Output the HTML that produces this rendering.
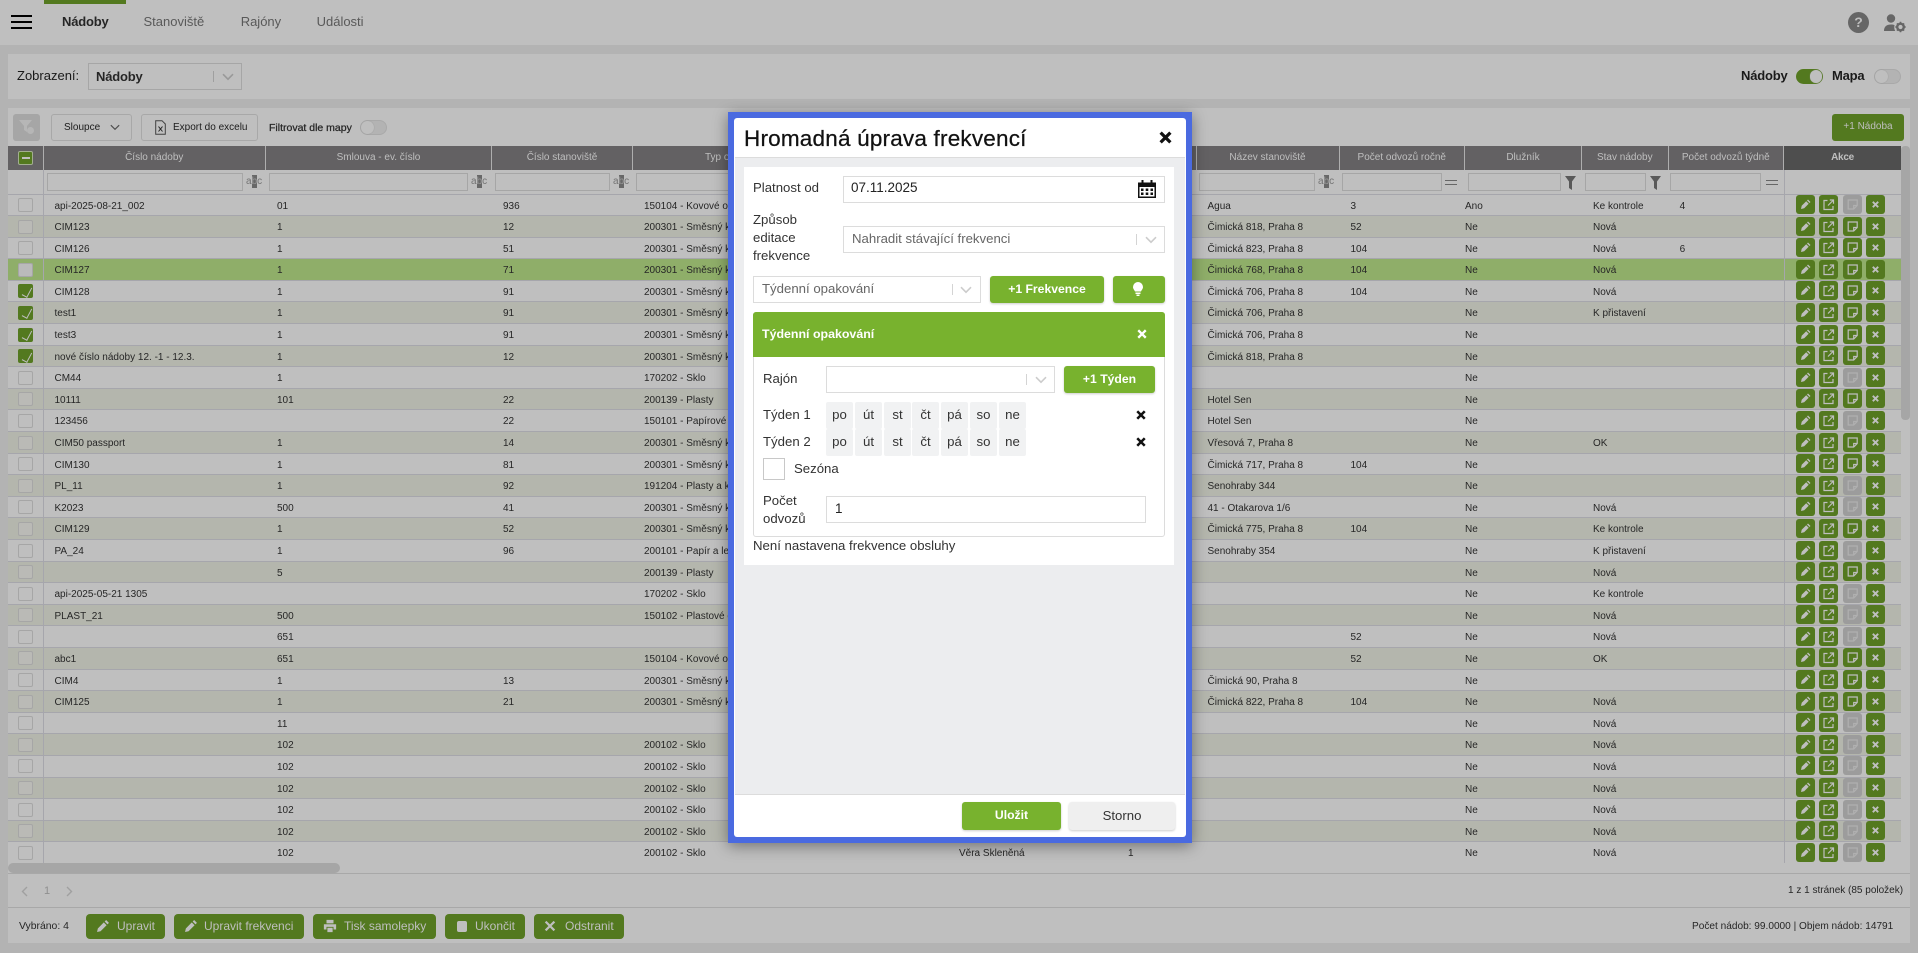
<!DOCTYPE html>
<html lang="cs"><head><meta charset="utf-8"><title>Hromadná úprava frekvencí</title>
<style>
*{box-sizing:border-box}
html,body{margin:0;padding:0}
body{width:1918px;height:953px;overflow:hidden;position:relative;background:#b3b3b3;font-family:"Liberation Sans",sans-serif;color:#262626}
.a{position:absolute}
.t{position:absolute;white-space:nowrap;line-height:20px}
.p{position:absolute;background:#bfbfbf}
.btn{position:absolute;background:#78b22e;color:#fff;border-radius:3px;text-align:center;white-space:nowrap}
.gb{background:#53791f;color:#bfbfbf}
.ol{position:absolute;border:1px solid #a8a8a8;border-radius:3px;background:#bfbfbf;font-size:10px;color:#1c1c1c;line-height:25px;white-space:nowrap}
.r{display:grid;grid-template-columns:35.5px 222.5px 226px 141px 315px 169px 79.5px 143px 125.5px 117px 86.6px 115.4px 117px;height:21.6px;line-height:23.2px;font-size:10px;border-bottom:1px solid #a6a6ac;background:#bfbfbf;color:#262626}
.r:nth-child(even){background:#b4b6ad}
.r.hl{background:#8fae69}
.r span{padding-left:11px;white-space:nowrap;overflow:hidden;min-width:0}
.r span:nth-child(10){padding-left:0}
.r span.c{padding:0}
.c i{display:block;position:relative;width:14.5px;height:14px;margin:3.5px 0 0 10.3px;border:1px solid #a6a6a6;border-radius:2px;background:#bfbfbf}
.r:nth-child(even) .c i{background:#babab6}
.r.hl .c i{background:#bababa}
.r .c i.on{background:#53791f;border-color:#53791f}
.c i.on:after{content:"";position:absolute;left:4.5px;top:0.5px;width:4.5px;height:10px;border:solid #bfbfbf;border-width:0 1.5px 1.5px 0;transform:rotate(28deg)}
.r svg{width:89px;height:19px;margin:.5px 0 0 12px;display:block}
.th{position:absolute;top:146px;height:24px;line-height:24px;background:#636163;color:#bfbfbf;font-size:10px;text-align:center;border-right:1px solid #aeaeae;white-space:nowrap;overflow:hidden}
.fi{position:absolute;top:173px;height:18px;background:#bfbfbf;border:1px solid #a6a6a6}
.abc{position:absolute;top:176px;font-size:10px;line-height:12px;color:#737373;white-space:nowrap;width:15px;text-align:center}
.abc b{background:#686868;color:#9b9b9b;font-weight:normal;padding:1px 0}
.fn{position:absolute;top:176px;width:11px;height:14px;fill:#595959}
.eq{position:absolute;top:180px;width:12px;height:5px;border-top:1.5px solid #666;border-bottom:1.5px solid #666}
.bb{position:absolute;top:914px;height:25px;line-height:24px;background:#53791f;color:#bfbfbf;border-radius:4px;font-size:12px;white-space:nowrap}
.bb svg{position:absolute;top:5px;left:10px;width:14px;height:14px}
.bb em{position:absolute;font-style:normal;top:0}
.lb{font-size:13.2px;color:#333}
.bx{position:absolute;background:#fff;border:1px solid #dcdcdc}
.sep{position:absolute;width:1px;height:11px;background:#d4d4d4}
.chev{position:absolute;width:12px;height:8px;fill:none;stroke:#ccc;stroke-width:1.6}
.chip{position:absolute;width:27px;height:27px;background:#f1f2f3;border-radius:2px;font-size:13.2px;line-height:26px;text-align:center;color:#333}
.x{position:absolute;width:12px;height:12px;fill:none;stroke:#111;stroke-width:3}
.tg{position:absolute;width:27px;height:14.5px;border-radius:8px;background:#b3b3b3;border:1px solid #a9a9a9}
.tg:after{content:"";position:absolute;left:0;top:0;width:12.5px;height:12.5px;border-radius:50%;background:#bfbfbf;box-shadow:0 0 1px #8c8c8c}
.tg.on{background:#53791f;border-color:#53791f}
.tg.on:after{left:12.5px}
</style></head><body>

<svg width="0" height="0" style="position:absolute">
<defs>
<symbol id="pn" viewBox="0 0 16 16"><path d="M11.6 1.2l3.2 3.2-1.7 1.7-3.2-3.2zM8.9 3.9l3.2 3.2-6.9 6.9-4 .9.9-4z" fill="#bfbfbf"/></symbol>
<symbol id="A" viewBox="0 0 89 19">
<rect x="0" width="19" height="19" rx="3" fill="#53791f"/><rect x="23" width="19" height="19" rx="3" fill="#53791f"/><rect x="47" width="19" height="19" rx="3" fill="#53791f"/><rect x="70" width="19" height="19" rx="3" fill="#53791f"/>
<path d="M12 4.500l2.500 2.500-1 1-2.500-2.500zM10.200 6.300l2.500 2.500-4.500 4.500-3.200.7.700-3.200z" fill="#bfbfbf"/>
<g fill="none" stroke="#bfbfbf" stroke-width="1.200"><path d="M31.500 5.500H28v9h9V11M32 10.500L37 5.500M33.800 5h3.700v3.700"/><path d="M52.200 5h9v5.500L57.700 14h-5.500zM57.700 14v-3.500h3.500"/><path d="M76.800 6.800l5.400 5.400M82.200 6.800l-5.400 5.400" stroke-width="1.900"/></g>
</symbol>
<symbol id="D" viewBox="0 0 89 19">
<rect x="0" width="19" height="19" rx="3" fill="#53791f"/><rect x="23" width="19" height="19" rx="3" fill="#53791f"/><rect x="47" width="19" height="19" rx="3" fill="#9c9c9c"/><rect x="70" width="19" height="19" rx="3" fill="#53791f"/>
<path d="M12 4.500l2.500 2.500-1 1-2.500-2.500zM10.200 6.300l2.500 2.500-4.500 4.500-3.200.7.700-3.200z" fill="#bfbfbf"/>
<g fill="none" stroke="#bfbfbf" stroke-width="1.200"><path d="M31.500 5.500H28v9h9V11M32 10.500L37 5.500M33.800 5h3.700v3.700"/><path d="M52.200 5h9v5.500L57.700 14h-5.500zM57.700 14v-3.500h3.500" stroke="#b0b0b0"/><path d="M76.800 6.800l5.400 5.400M82.200 6.800l-5.400 5.400" stroke-width="1.900"/></g>
</symbol>
<symbol id="ch" viewBox="0 0 12 8"><path d="M1 1.200l5 5 5-5"/></symbol>
<symbol id="xx" viewBox="0 0 12 12"><path d="M1.500 1.500l9 9M10.500 1.500l-9 9"/></symbol>
<symbol id="fu" viewBox="0 0 11 14"><path d="M0 0h11L7 5.500V14L4 12V5.500z"/></symbol>
</defs></svg>

<!-- top bar -->
<div class="p" style="left:0;top:0;width:1918px;height:45px"></div>
<div class="a gb" style="left:44px;top:0;width:82px;height:4px"></div>
<div class="a" style="left:11px;top:15px;width:21px;height:2px;background:#000"></div>
<div class="a" style="left:11px;top:21px;width:21px;height:2px;background:#000"></div>
<div class="a" style="left:11px;top:27px;width:21px;height:2px;background:#000"></div>
<div class="t" style="left:62px;top:12px;font-size:13px;font-weight:bold;color:#262626;letter-spacing:-.2px">Nádoby</div>
<div class="t" style="left:143.500px;top:12px;font-size:13px;color:#595959">Stanoviště</div>
<div class="t" style="left:240.700px;top:12px;font-size:13px;color:#595959">Rajóny</div>
<div class="t" style="left:316.600px;top:12px;font-size:13px;color:#595959">Události</div>
<div class="a" style="left:1848px;top:12px;width:21px;height:21px;border-radius:50%;background:#666;color:#bfbfbf;font-weight:bold;font-size:14px;line-height:21px;text-align:center">?</div>
<svg class="a" style="left:1884px;top:14px" width="22" height="19" viewBox="0 0 22 19"><circle cx="7" cy="4.500" r="4.200" fill="#666"/><path d="M0 17c0-4.500 2.500-6.500 7-6.500 1.500 0 2.700.2 3.600.7-.7 1.800-.3 4 .6 5.800z" fill="#666"/><circle cx="16.500" cy="13" r="3.300" fill="none" stroke="#666" stroke-width="2.400"/><path d="M16.500 7.800v2M16.500 16.200v2M11.300 13h2M19.700 13h2M12.900 9.400l1.300 1.300M18.800 15.300l1.300 1.300M20.100 9.400l-1.300 1.300M14.200 15.300l-1.300 1.300" stroke="#666" stroke-width="1.600"/></svg>

<!-- view panel -->
<div class="p" style="left:8px;top:54px;width:1902px;height:45px"></div>
<div class="t" style="left:17px;top:65.500px;font-size:13px;color:#1a1a1a">Zobrazení:</div>
<div class="a" style="left:88px;top:63px;width:154px;height:27px;background:#bfbfbf;border:1px solid #a6a6a6"></div>
<div class="t" style="left:96px;top:66.500px;font-size:13px;font-weight:bold;color:#262626;letter-spacing:-.2px">Nádoby</div>
<div class="sep" style="left:213px;top:71px;background:#9f9f9f"></div>
<svg class="chev" style="left:222px;top:73px;stroke:#999"><use href="#ch"/></svg>
<div class="t" style="left:1741px;top:65.500px;font-size:13px;font-weight:bold;color:#1a1a1a;letter-spacing:-.2px">Nádoby</div>
<div class="tg on" style="left:1796px;top:69px"></div>
<div class="t" style="left:1832px;top:65.500px;font-size:13px;font-weight:bold;color:#1a1a1a;letter-spacing:-.2px">Mapa</div>
<div class="tg" style="left:1874px;top:69px"></div>

<!-- table panel -->
<div class="p" style="left:8px;top:108px;width:1902px;height:835px"></div>
<div class="a" style="left:13px;top:114px;width:27px;height:27px;border-radius:3px;background:#a6a6a6"></div>
<svg class="a" style="left:19px;top:120px" width="16" height="16" viewBox="0 0 16 16"><path d="M0 0h13L8 6v6L5 10V6z" fill="#b6b6b6"/><circle cx="11.500" cy="10.500" r="3.500" fill="#b6b6b6"/></svg>
<div class="ol" style="left:51px;top:114px;width:81px;height:27px;padding-left:12px">Sloupce</div>
<svg class="chev" style="left:110px;top:124px;width:10px;height:7px;stroke:#4c4c4c;stroke-width:1.4"><use href="#ch"/></svg>
<div class="ol" style="left:141px;top:114px;width:117px;height:27px;padding-left:31px">Export do excelu</div>
<svg class="a" style="left:155px;top:120px" width="11" height="15" viewBox="0 0 11 15"><path d="M.7.700h6.300l3.300 3.300v10.300H.7z" fill="none" stroke="#404040"/><path d="M3.500 6.500l4 5M7.500 6.500l-4 5" stroke="#262626"/></svg>
<div class="t" style="left:269px;top:118px;font-size:10.500px;color:#262626;-webkit-text-stroke:.25px #262626">Filtrovat dle mapy</div>
<div class="tg" style="left:360px;top:120px"></div>
<div class="btn gb" style="left:1832px;top:114px;width:72px;height:27px;font-size:10px;line-height:26px">+1 Nádoba</div>

<!-- header -->
<div class="th" style="left:8px;width:35.500px"></div>
<div class="a gb" style="left:18.300px;top:151px;width:14.500px;height:14px;border:1px solid #a2ae90;border-radius:2px"></div>
<div class="a" style="left:21.500px;top:157px;width:8px;height:2px;background:#bfbfbf"></div>
<div class="th" style="left:43.500px;width:222.500px">Číslo nádoby</div>
<div class="th" style="left:266px;width:226px">Smlouva - ev. číslo</div>
<div class="th" style="left:492px;width:141px">Číslo stanoviště</div>
<div class="th" style="left:633px;width:315px;text-align:left;padding-left:72px">Typ odpadu a nádoby</div>
<div class="th" style="left:948px;width:169px">Vlastník</div>
<div class="th" style="left:1117px;width:79.500px">Počet</div>
<div class="th" style="left:1196.500px;width:143px">Název stanoviště</div>
<div class="th" style="left:1339.500px;width:125.500px">Počet odvozů ročně</div>
<div class="th" style="left:1465px;width:117px">Dlužník</div>
<div class="th" style="left:1582px;width:86.600px">Stav nádoby</div>
<div class="th" style="left:1668.600px;width:115.400px">Počet odvozů týdně</div>
<div class="th" style="left:1784px;width:117px;background:#4e4e4e;font-weight:bold;border:0;letter-spacing:-.3px">Akce</div>

<!-- filter row -->
<div class="a" style="left:8px;top:170px;width:1893px;height:24.500px;background:#bfbfbf;border-bottom:1px solid #a6a6ac"></div>
<div class="fi" style="left:47px;width:196px"></div><div class="abc" style="left:246px"><span>a</span><b>b</b><span>c</span></div>
<div class="fi" style="left:269px;width:199px"></div><div class="abc" style="left:471px"><span>a</span><b>b</b><span>c</span></div>
<div class="fi" style="left:495px;width:114.500px"></div><div class="abc" style="left:613px"><span>a</span><b>b</b><span>c</span></div>
<div class="fi" style="left:636px;width:260px"></div>
<div class="fi" style="left:1199px;width:116px"></div><div class="abc" style="left:1318px"><span>a</span><b>b</b><span>c</span></div>
<div class="fi" style="left:1342px;width:99.500px"></div><div class="eq" style="left:1445px"></div>
<div class="fi" style="left:1468px;width:92.500px"></div><svg class="fn" style="left:1565px"><use href="#fu"/></svg>
<div class="fi" style="left:1585px;width:61px"></div><svg class="fn" style="left:1649.500px"><use href="#fu"/></svg>
<div class="fi" style="left:1670px;width:90.500px"></div><div class="eq" style="left:1766px"></div>

<!-- rows -->
<div class="a" style="left:8px;top:194.500px;width:1893px">
<div class="r"><span class="c"><i></i></span><span>api-2025-08-21_002</span><span>01</span><span>936</span><span>150104 - Kovové obaly</span><span></span><span></span><span>Agua</span><span>3</span><span>Ano</span><span>Ke kontrole</span><span>4</span><svg><use href="#D"/></svg></div>
<div class="r"><span class="c"><i></i></span><span>CIM123</span><span>1</span><span>12</span><span>200301 - Směsný komunální odpad</span><span></span><span></span><span>Čimická 818, Praha 8</span><span>52</span><span>Ne</span><span>Nová</span><span></span><svg><use href="#A"/></svg></div>
<div class="r"><span class="c"><i></i></span><span>CIM126</span><span>1</span><span>51</span><span>200301 - Směsný komunální odpad</span><span></span><span></span><span>Čimická 823, Praha 8</span><span>104</span><span>Ne</span><span>Nová</span><span>6</span><svg><use href="#A"/></svg></div>
<div class="r hl"><span class="c"><i></i></span><span>CIM127</span><span>1</span><span>71</span><span>200301 - Směsný komunální odpad</span><span></span><span></span><span>Čimická 768, Praha 8</span><span>104</span><span>Ne</span><span>Nová</span><span></span><svg><use href="#A"/></svg></div>
<div class="r"><span class="c"><i class="on"></i></span><span>CIM128</span><span>1</span><span>91</span><span>200301 - Směsný komunální odpad</span><span></span><span></span><span>Čimická 706, Praha 8</span><span>104</span><span>Ne</span><span>Nová</span><span></span><svg><use href="#A"/></svg></div>
<div class="r"><span class="c"><i class="on"></i></span><span>test1</span><span>1</span><span>91</span><span>200301 - Směsný komunální odpad</span><span></span><span></span><span>Čimická 706, Praha 8</span><span></span><span>Ne</span><span>K přistavení</span><span></span><svg><use href="#A"/></svg></div>
<div class="r"><span class="c"><i class="on"></i></span><span>test3</span><span>1</span><span>91</span><span>200301 - Směsný komunální odpad</span><span></span><span></span><span>Čimická 706, Praha 8</span><span></span><span>Ne</span><span></span><span></span><svg><use href="#A"/></svg></div>
<div class="r"><span class="c"><i class="on"></i></span><span>nové číslo nádoby 12. -1 - 12.3.</span><span>1</span><span>12</span><span>200301 - Směsný komunální odpad</span><span></span><span></span><span>Čimická 818, Praha 8</span><span></span><span>Ne</span><span></span><span></span><svg><use href="#A"/></svg></div>
<div class="r"><span class="c"><i></i></span><span>CM44</span><span>1</span><span></span><span>170202 - Sklo</span><span></span><span></span><span></span><span></span><span>Ne</span><span></span><span></span><svg><use href="#D"/></svg></div>
<div class="r"><span class="c"><i></i></span><span>10111</span><span>101</span><span>22</span><span>200139 - Plasty</span><span></span><span></span><span>Hotel Sen</span><span></span><span>Ne</span><span></span><span></span><svg><use href="#A"/></svg></div>
<div class="r"><span class="c"><i></i></span><span>123456</span><span></span><span>22</span><span>150101 - Papírové obaly</span><span></span><span></span><span>Hotel Sen</span><span></span><span>Ne</span><span></span><span></span><svg><use href="#D"/></svg></div>
<div class="r"><span class="c"><i></i></span><span>CIM50 passport</span><span>1</span><span>14</span><span>200301 - Směsný komunální odpad</span><span></span><span></span><span>Vřesová 7, Praha 8</span><span></span><span>Ne</span><span>OK</span><span></span><svg><use href="#A"/></svg></div>
<div class="r"><span class="c"><i></i></span><span>CIM130</span><span>1</span><span>81</span><span>200301 - Směsný komunální odpad</span><span></span><span></span><span>Čimická 717, Praha 8</span><span>104</span><span>Ne</span><span></span><span></span><svg><use href="#A"/></svg></div>
<div class="r"><span class="c"><i></i></span><span>PL_11</span><span>1</span><span>92</span><span>191204 - Plasty a kaučuk</span><span></span><span></span><span>Senohraby 344</span><span></span><span>Ne</span><span></span><span></span><svg><use href="#D"/></svg></div>
<div class="r"><span class="c"><i></i></span><span>K2023</span><span>500</span><span>41</span><span>200301 - Směsný komunální odpad</span><span></span><span></span><span>41 - Otakarova 1/6</span><span></span><span>Ne</span><span>Nová</span><span></span><svg><use href="#D"/></svg></div>
<div class="r"><span class="c"><i></i></span><span>CIM129</span><span>1</span><span>52</span><span>200301 - Směsný komunální odpad</span><span></span><span></span><span>Čimická 775, Praha 8</span><span>104</span><span>Ne</span><span>Ke kontrole</span><span></span><svg><use href="#A"/></svg></div>
<div class="r"><span class="c"><i></i></span><span>PA_24</span><span>1</span><span>96</span><span>200101 - Papír a lepenka</span><span></span><span></span><span>Senohraby 354</span><span></span><span>Ne</span><span>K přistavení</span><span></span><svg><use href="#D"/></svg></div>
<div class="r"><span class="c"><i></i></span><span></span><span>5</span><span></span><span>200139 - Plasty</span><span></span><span></span><span></span><span></span><span>Ne</span><span>Nová</span><span></span><svg><use href="#A"/></svg></div>
<div class="r"><span class="c"><i></i></span><span>api-2025-05-21 1305</span><span></span><span></span><span>170202 - Sklo</span><span></span><span></span><span></span><span></span><span>Ne</span><span>Ke kontrole</span><span></span><svg><use href="#D"/></svg></div>
<div class="r"><span class="c"><i></i></span><span>PLAST_21</span><span>500</span><span></span><span>150102 - Plastové obaly</span><span></span><span></span><span></span><span></span><span>Ne</span><span>Nová</span><span></span><svg><use href="#D"/></svg></div>
<div class="r"><span class="c"><i></i></span><span></span><span>651</span><span></span><span></span><span></span><span></span><span></span><span>52</span><span>Ne</span><span>Nová</span><span></span><svg><use href="#D"/></svg></div>
<div class="r"><span class="c"><i></i></span><span>abc1</span><span>651</span><span></span><span>150104 - Kovové obaly</span><span></span><span></span><span></span><span>52</span><span>Ne</span><span>OK</span><span></span><svg><use href="#A"/></svg></div>
<div class="r"><span class="c"><i></i></span><span>CIM4</span><span>1</span><span>13</span><span>200301 - Směsný komunální odpad</span><span></span><span></span><span>Čimická 90, Praha 8</span><span></span><span>Ne</span><span></span><span></span><svg><use href="#A"/></svg></div>
<div class="r"><span class="c"><i></i></span><span>CIM125</span><span>1</span><span>21</span><span>200301 - Směsný komunální odpad</span><span></span><span></span><span>Čimická 822, Praha 8</span><span>104</span><span>Ne</span><span>Nová</span><span></span><svg><use href="#A"/></svg></div>
<div class="r"><span class="c"><i></i></span><span></span><span>11</span><span></span><span></span><span></span><span></span><span></span><span></span><span>Ne</span><span>Nová</span><span></span><svg><use href="#D"/></svg></div>
<div class="r"><span class="c"><i></i></span><span></span><span>102</span><span></span><span>200102 - Sklo</span><span></span><span></span><span></span><span></span><span>Ne</span><span>Nová</span><span></span><svg><use href="#D"/></svg></div>
<div class="r"><span class="c"><i></i></span><span></span><span>102</span><span></span><span>200102 - Sklo</span><span></span><span></span><span></span><span></span><span>Ne</span><span>Nová</span><span></span><svg><use href="#D"/></svg></div>
<div class="r"><span class="c"><i></i></span><span></span><span>102</span><span></span><span>200102 - Sklo</span><span></span><span></span><span></span><span></span><span>Ne</span><span>Nová</span><span></span><svg><use href="#D"/></svg></div>
<div class="r"><span class="c"><i></i></span><span></span><span>102</span><span></span><span>200102 - Sklo</span><span></span><span></span><span></span><span></span><span>Ne</span><span>Nová</span><span></span><svg><use href="#D"/></svg></div>
<div class="r"><span class="c"><i></i></span><span></span><span>102</span><span></span><span>200102 - Sklo</span><span></span><span></span><span></span><span></span><span>Ne</span><span>Nová</span><span></span><svg><use href="#D"/></svg></div>
<div class="r"><span class="c"><i></i></span><span></span><span>102</span><span></span><span>200102 - Sklo</span><span>Věra Skleněná</span><span>1</span><span></span><span></span><span>Ne</span><span>Nová</span><span></span><svg><use href="#D"/></svg></div>
</div>
<div class="a" style="left:43px;top:170px;width:1px;height:693px;background:#a6a6ac"></div>
<div class="a" style="left:1784px;top:170px;width:1px;height:693px;background:#a6a6ac"></div>

<!-- scrollbars -->
<div class="a" style="left:1901px;top:146px;width:9px;height:274px;background:#a6a6a6;border-radius:4px"></div>
<div class="a" style="left:8px;top:863px;width:1893px;height:10px;background:#bfbfbf"></div>
<div class="a" style="left:8px;top:863px;width:332px;height:10px;background:#a6a6a6;border-radius:5px"></div>
<div class="a" style="left:8px;top:873px;width:1902px;height:1px;background:#a8a8a8"></div>
<div class="a" style="left:8px;top:907px;width:1902px;height:1px;background:#a8a8a8"></div>

<!-- pagination -->
<svg class="a" style="left:21px;top:886px" width="7" height="11" viewBox="0 0 7 11"><path d="M6 1L1.500 5.500 6 10" fill="none" stroke="#a0a0a0" stroke-width="1.400"/></svg>
<div class="t" style="left:44px;top:881px;font-size:11px;color:#8f8f8f">1</div>
<svg class="a" style="left:66px;top:886px" width="7" height="11" viewBox="0 0 7 11"><path d="M1 1l4.500 4.500L1 10" fill="none" stroke="#a0a0a0" stroke-width="1.400"/></svg>
<div class="t" style="left:1788px;top:881px;font-size:10px;color:#262626">1 z 1 stránek (85 položek)</div>

<!-- bottom bar -->
<div class="t" style="left:19px;top:917px;font-size:10.400px;color:#262626">Vybráno: 4</div>
<div class="bb" style="left:86px;width:79px"><svg style="left:10px"><use href="#pn"/></svg><em style="left:31px">Upravit</em></div>
<div class="bb" style="left:174px;width:130px"><svg><use href="#pn"/></svg><em style="left:30px">Upravit frekvenci</em></div>
<div class="bb" style="left:313px;width:123px"><svg viewBox="0 0 16 16"><path d="M4 1h8v4H4zM1 6h14v6h-3V9H4v3H1zM5 10h6v5H5z" fill="#bfbfbf"/></svg><em style="left:31px">Tisk samolepky</em></div>
<div class="bb" style="left:445px;width:80px"><div class="a" style="left:12px;top:7px;width:10px;height:11px;background:#bfbfbf;border-radius:2px"></div><em style="left:30px">Ukončit</em></div>
<div class="bb" style="left:534px;width:90px"><svg viewBox="0 0 16 16" style="left:9px"><path d="M3 3l10 10M13 3L3 13" stroke="#bfbfbf" stroke-width="2.600" fill="none"/></svg><em style="left:31px">Odstranit</em></div>
<div class="t" style="left:1692px;top:917px;font-size:10.100px;color:#262626">Počet nádob: 99.0000 | Objem nádob: 14791</div>

<!-- modal -->
<div class="a" style="left:728px;top:112px;width:464px;height:731px;background:#4a6ae0;box-shadow:0 3px 14px rgba(0,0,0,.4)"></div>
<div class="a" style="left:734px;top:118px;width:452px;height:719px;background:#fff;border-radius:3px"></div>
<div class="a" style="left:735px;top:157px;width:450px;height:638px;background:#ecedef;border-top:1px solid #dcdcdc;border-bottom:1px solid #dcdcdc"></div>
<div class="t" style="left:744px;top:127px;font-size:22.500px;line-height:24px;color:#111;letter-spacing:.2px;-webkit-text-stroke:.25px #111">Hromadná úprava frekvencí</div>
<svg class="x" style="left:1159px;top:131px;width:13px;height:13px"><use href="#xx"/></svg>
<div class="a" style="left:744px;top:167px;width:430px;height:398px;background:#fff"></div>

<div class="t lb" style="left:753px;top:178px">Platnost od</div>
<div class="bx" style="left:843px;top:176px;width:322px;height:27px"></div>
<div class="t" style="left:851px;top:178px;font-size:13.500px;color:#222">07.11.2025</div>
<svg class="a" style="left:1138px;top:180px" width="18" height="18" viewBox="0 0 18 18"><path d="M0 2.500h3.500V0h2v2.500h7V0h2v2.500H18V18H0z" fill="#111"/><path d="M1.500 7h15v9.500h-15z" fill="#fff"/><path d="M3 8.500h2.500V11H3zM7.700 8.500h2.600V11H7.700zM12.500 8.500H15V11h-2.500zM3 12.500h2.500V15H3zM7.700 12.500h2.600V15H7.700zM12.500 12.500H15V15h-2.500z" fill="#111"/></svg>

<div class="t lb" style="left:753px;top:210px">Způsob</div>
<div class="t lb" style="left:753px;top:228px">editace</div>
<div class="t lb" style="left:753px;top:246px">frekvence</div>
<div class="bx" style="left:843px;top:226px;width:322px;height:27px"></div>
<div class="t" style="left:852px;top:228.500px;font-size:13.200px;color:#666">Nahradit stávající frekvenci</div>
<div class="sep" style="left:1136px;top:234px"></div>
<svg class="chev" style="left:1145px;top:236px"><use href="#ch"/></svg>

<div class="bx" style="left:753px;top:276px;width:228px;height:27px"></div>
<div class="t" style="left:762px;top:278.500px;font-size:13.200px;color:#666">Týdenní opakování</div>
<div class="sep" style="left:952px;top:284px"></div>
<svg class="chev" style="left:960px;top:286px"><use href="#ch"/></svg>
<div class="btn" style="left:990px;top:276px;width:114px;height:27px;font-size:12.200px;font-weight:bold;line-height:26px;box-shadow:0 1px 2px rgba(0,0,0,.2)">+1 Frekvence</div>
<div class="btn" style="left:1113px;top:276px;width:52px;height:27px;box-shadow:0 1px 2px rgba(0,0,0,.2)"></div>
<svg class="a" style="left:1133px;top:282px" width="10" height="14" viewBox="0 0 10 14"><path d="M5 0a5 5 0 0 1 5 5c0 2-1.500 3-2 4.500H2C1.500 8 0 7 0 5a5 5 0 0 1 5-5z" fill="#fff"/><path d="M2.500 10.500h5v1.500h-5zM3.500 12.500h3V14h-3z" fill="#fff"/></svg>

<div class="a" style="left:753px;top:312px;width:412px;height:225px;border:1px solid #dcdcdc;border-radius:3px;background:#fff"></div>
<div class="a" style="left:753px;top:312px;width:412px;height:45px;background:#78b22e;border-radius:3px 3px 0 0"></div>
<div class="t" style="left:762px;top:324px;font-size:12.400px;font-weight:bold;color:#fff">Týdenní opakování</div>
<svg class="x" style="left:1137px;top:329px;width:10px;height:10px;stroke:#fff;stroke-width:2.800"><use href="#xx"/></svg>

<div class="t lb" style="left:763px;top:369px">Rajón</div>
<div class="bx" style="left:826px;top:366px;width:229px;height:27px"></div>
<div class="sep" style="left:1026px;top:374px"></div>
<svg class="chev" style="left:1035px;top:376px"><use href="#ch"/></svg>
<div class="btn" style="left:1064px;top:366px;width:91px;height:27px;font-size:12.200px;font-weight:bold;line-height:26px;box-shadow:0 1px 2px rgba(0,0,0,.2)">+1 Týden</div>

<div class="t lb" style="left:763px;top:405px">Týden 1</div>
<div class="chip" style="left:826px;top:402px">po</div><div class="chip" style="left:855px;top:402px">út</div><div class="chip" style="left:884px;top:402px">st</div><div class="chip" style="left:912px;top:402px">čt</div><div class="chip" style="left:941px;top:402px">pá</div><div class="chip" style="left:970px;top:402px">so</div><div class="chip" style="left:999px;top:402px">ne</div>
<svg class="x" style="left:1136px;top:410px;width:10px;height:10px"><use href="#xx"/></svg>
<div class="t lb" style="left:763px;top:432px">Týden 2</div>
<div class="chip" style="left:826px;top:429px">po</div><div class="chip" style="left:855px;top:429px">út</div><div class="chip" style="left:884px;top:429px">st</div><div class="chip" style="left:912px;top:429px">čt</div><div class="chip" style="left:941px;top:429px">pá</div><div class="chip" style="left:970px;top:429px">so</div><div class="chip" style="left:999px;top:429px">ne</div>
<svg class="x" style="left:1136px;top:437px;width:10px;height:10px"><use href="#xx"/></svg>

<div class="bx" style="left:763px;top:458px;width:22px;height:22px;border-color:#c8c8c8"></div>
<div class="t lb" style="left:794px;top:459px">Sezóna</div>
<div class="t lb" style="left:763px;top:491px">Počet</div>
<div class="t lb" style="left:763px;top:509px">odvozů</div>
<div class="bx" style="left:826px;top:496px;width:320px;height:27px"></div>
<div class="t" style="left:835px;top:499px;font-size:13.500px;color:#222">1</div>
<div class="t lb" style="left:753px;top:536px">Není nastavena frekvence obsluhy</div>

<div class="btn" style="left:962px;top:802px;width:99px;height:28px;font-size:12.200px;font-weight:bold;line-height:27px;box-shadow:0 1px 2px rgba(0,0,0,.2)">Uložit</div>
<div class="btn" style="left:1069px;top:802px;width:106px;height:28px;background:#efefef;color:#333;font-size:13.200px;line-height:27px;box-shadow:0 1px 2px rgba(0,0,0,.2)">Storno</div>

</body></html>
